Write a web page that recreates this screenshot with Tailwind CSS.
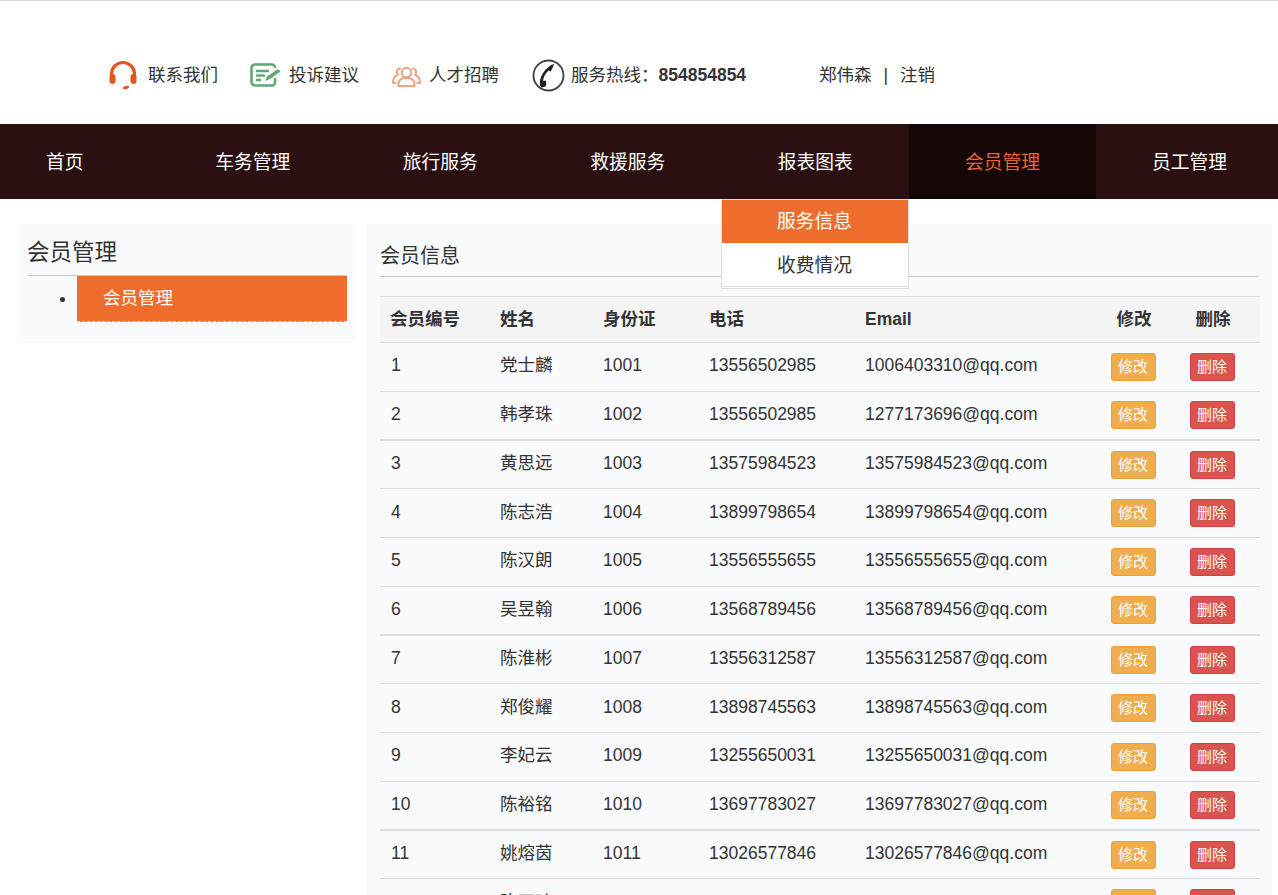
<!DOCTYPE html>
<html lang="zh-CN">
<head>
  <meta charset="UTF-8" />
  <title>会员管理</title>
  <script src="https://cdn.jsdelivr.net/npm/@tailwindcss/browser@4"></script>
</head>
<body class="h-[895px] overflow-hidden bg-white text-[#333] font-['Liberation_Sans','Noto_Sans_CJK_SC',sans-serif]">
  <!-- top bar -->
  <div class="h-[124px] border-t border-[#ddd] flex items-start pt-[50px] pl-[108px] text-[17.5px] leading-[48px]">
    <div class="flex items-center h-[48px] w-[142px]">
      <svg class="w-[30px] h-[30px] mr-[10px]" viewBox="0 0 30 30" fill="none"><path d="M3.500 17V14a11.500 11.500 0 0 1 23 0v3" stroke="#e2571e" stroke-width="3.200"/><rect x="1.500" y="14" width="6" height="10" rx="3" fill="#e2571e"/><rect x="22.500" y="14" width="6" height="10" rx="3" fill="#e2571e"/><ellipse cx="18" cy="27.500" rx="3.200" ry="1.500" fill="#e2571e" transform="rotate(-15 18 27.500)"/></svg>
      <span>联系我们</span>
    </div>
    <div class="flex items-center h-[48px] w-[141px]">
      <svg class="w-[32px] h-[24px] mr-[7px]" viewBox="0 0 32 24" fill="none"><path d="M25 5V4.500A3 3 0 0 0 22 1.500H5A3.500 3.500 0 0 0 1.500 5v14A3.500 3.500 0 0 0 5 22.500h17a3 3 0 0 0 3-3V15" stroke="#5fa873" stroke-width="2.600"/><path d="M6 8h13M6 12.500h9M6 17h5" stroke="#5fa873" stroke-width="2.400"/><path d="M15 18l2-4.500L28 6l2.500 2.500L20 16z" fill="#5fa873"/></svg>
      <span>投诉建议</span>
    </div>
    <div class="flex items-center h-[48px] w-[140px]">
      <svg class="w-[29px] h-[21px] ml-[1px] mr-[8px] mt-[3px]" viewBox="0 0 29 21" fill="none" stroke="#f0a385" stroke-width="2"><circle cx="14.500" cy="6.500" r="4.800"/><path d="M6.500 20c-.5-4 1.500-7 5-8h6c3.500 1 5.500 4 5 8z"/><path d="M9 2.200a3.800 3.800 0 0 0-3 6.500C3 10 .8 13 1 17h3.500M20 2.200a3.800 3.800 0 0 1 3 6.500c3 1.300 5.200 4.300 5 8.300h-3.500"/></svg>
      <span>人才招聘</span>
    </div>
    <div class="flex items-center h-[48px] w-[288px]">
      <svg class="w-[33px] h-[33px] ml-[1px] mr-[6px]" viewBox="0 0 33 33" fill="none"><circle cx="16.500" cy="16.500" r="15" stroke="#444" stroke-width="1.900"/><path d="M22 5c-6 1.500-12.500 9-14 16.500-.6 3 0 5.500 1.500 7l4-1c1-1.500 1-4.500 0-6l-2.400.6c0-3 2-7.500 5.400-10.600l2 1C20 10.500 21.500 7 22 5z" fill="#1f1f1f"/></svg>
      <span>服务热线：<b class="font-bold">854854854</b></span>
    </div>
    <div class="flex items-center h-[48px]">
      <span>郑伟森</span>
      <span class="mx-[12px]">|</span>
      <span>注销</span>
    </div>
  </div>

  <!-- nav -->
  <nav class="flex h-[75px] bg-[#2a1010] text-white text-[18.75px] leading-[77px] text-center relative">
    <a class="w-[159px] text-left pl-[46px]">首页</a>
    <a class="w-[187.5px]">车务管理</a>
    <a class="w-[187.5px]">旅行服务</a>
    <a class="w-[187.5px]">救援服务</a>
    <div class="w-[187.5px] relative">
      <a>报表图表</a>
      <div class="absolute z-10 left-[-1px] top-[75px] w-[188px] pb-[1px] bg-white border border-[#ddd] leading-[44px]">
        <div class="h-[43px] bg-[#ee6d2d] text-white">服务信息</div>
        <div class="h-[44px] pt-[1px] text-[#333] border-b border-[#ddd]">收费情况</div>
      </div>
    </div>
    <a class="w-[187px] bg-[#150705] text-[#f0622a]">会员管理</a>
    <a class="flex-1 text-left pl-[56px]">员工管理</a>
  </nav>

  <div class="flex items-start pt-[25px] pl-[19px]">
    <!-- left menu -->
    <aside class="w-[337px] h-[119px] bg-[#f9fafc] pl-[8px] pr-[9px]">
      <h3 class="h-[52px] leading-[57px] text-[22.5px] border-b border-[#ccc]">会员管理</h3>
      <ul class="list-disc pl-[50px]">
        <li class="text-[17.5px]">
          <a class="block h-[46px] leading-[45px] pl-[26px] bg-[#ee6d2d] text-white border-b border-dashed border-[#ddd]">会员管理</a>
        </li>
      </ul>
    </aside>

    <!-- member table -->
    <main class="ml-[11px] w-[905px] h-[700px] bg-[#f9fafc] px-[13px]">
      <h4 class="h-[53px] pt-[16px] leading-[32px] text-[20px] border-b border-[#ccc]">会员信息</h4>
      <table class="mt-[19px] w-[880px] table-fixed border-collapse text-[17.5px] leading-[25px]">
        <colgroup>
          <col class="w-[120px]" /><col class="w-[103px]" /><col class="w-[106px]" /><col class="w-[156px]" /><col class="w-[229px]" /><col class="w-[80px]" /><col class="w-[86px]" />
        </colgroup>
        <thead>
          <tr class="h-[46px] bg-[#f4f4f4] border-y border-[#ddd] font-bold text-left">
            <th class="pl-[10px]">会员编号</th><th>姓名</th><th>身份证</th><th>电话</th><th>Email</th><th class="text-center">修改</th><th class="text-center pr-[8px]">删除</th>
          </tr>
        </thead>
        <tbody id="rows">
          <tr class="h-[48.75px] border-b border-[#ddd] nth-[4n+2]:border-b-2"><td class="pl-[11px] pb-[2px]">1</td><td class="pb-[2px]">党士麟</td><td class="pb-[2px]">1001</td><td class="pb-[2px]">13556502985</td><td class="pb-[2px]">1006403310@qq.com</td><td class="text-center pr-[2px]"><button class="w-[45px] h-[28px] rounded-[3px] bg-[#f0ad4e] border border-[#eea236] text-white text-[15px] leading-[26px]">修改</button></td><td class="text-center pr-[10px]"><button class="w-[45px] h-[28px] rounded-[3px] bg-[#d9534f] border border-[#d43f3a] text-white text-[15px] leading-[26px]">删除</button></td></tr>
        </tbody>
      </table>
    </main>
  </div>

  <script>
    const members = [
      ["2","韩孝珠","1002","13556502985","1277173696@qq.com"],
      ["3","黄思远","1003","13575984523","13575984523@qq.com"],
      ["4","陈志浩","1004","13899798654","13899798654@qq.com"],
      ["5","陈汉朗","1005","13556555655","13556555655@qq.com"],
      ["6","吴昱翰","1006","13568789456","13568789456@qq.com"],
      ["7","陈淮彬","1007","13556312587","13556312587@qq.com"],
      ["8","郑俊耀","1008","13898745563","13898745563@qq.com"],
      ["9","李妃云","1009","13255650031","13255650031@qq.com"],
      ["10","陈裕铭","1010","13697783027","13697783027@qq.com"],
      ["11","姚熔茵","1011","13026577846","13026577846@qq.com"],
      ["12","陈雨晴","1012","13577895236","13577895236@qq.com"]
    ];
    const tbody = document.getElementById("rows");
    const first = tbody.querySelector("tr");
    members.forEach((m) => {
      const tr = first.cloneNode(true);
      m.forEach((v, i) => { tr.children[i].textContent = v; });
      tbody.appendChild(tr);
    });
  </script>
</body>
</html>
